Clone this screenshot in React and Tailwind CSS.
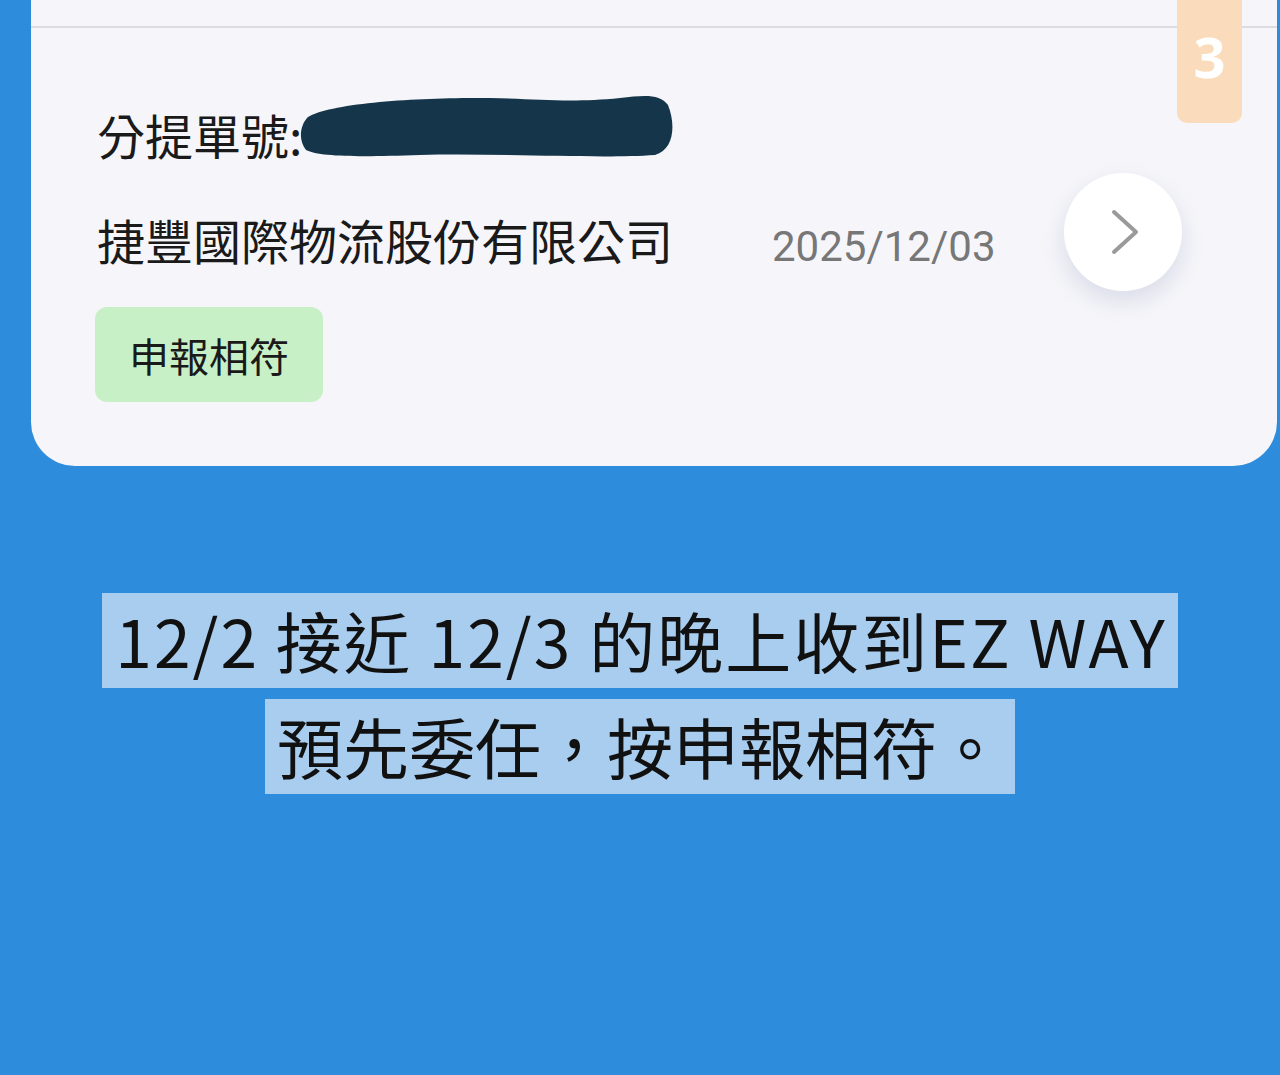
import React from "react";

const cjk = { fontFamily: '"Noto Sans CJK TC", "Noto Sans", sans-serif' };

const Redaction = () => (
  <svg width="373" height="63" viewBox="0 0 373 63" className="mb-[16px] -ml-[2px] shrink-0">
    <path
      d="M 8 22 C 30 8, 120 2, 190 3 C 240 4, 270 8, 320 3 C 345 0, 360 -1, 368 10 C 376 30, 374 55, 355 60 C 300 64, 200 58, 120 60 C 60 62, 20 62, 6 55 C -2 45, 0 30, 8 22 Z"
      fill="#15364a"
    />
  </svg>
);

export default function App() {
  return (
    <div className="w-[1280px] h-[1075px] overflow-hidden bg-[#2d8cdc]" style={cjk}>
      {/* CARD */}
      <div className="relative ml-[31px] mr-[3px] h-[466px] rounded-b-[44px] bg-[#f6f6fa]">
        <div className="h-[28px] border-b-2 border-[#dcdce2]" />

        {/* number badge */}
        <div className="absolute right-[35px] top-0 flex h-[123px] w-[65px] justify-center rounded-b-[10px] bg-[#fadcbc] pt-[28px]">
          <span
            className="text-[56px] font-bold leading-none text-white"
            style={{ fontFamily: '"Open Sans", "Liberation Sans", sans-serif' }}
          >
            3
          </span>
        </div>

        <div className="pl-[64px]">
          {/* 分提單號 */}
          <div className="mt-[78px] flex h-[56px] items-center pl-[2px]">
            <span className="text-[48px] leading-none text-[#1a1a1a]">分提單號:</span>
            <Redaction />
          </div>

          {/* company + date + arrow */}
          <div className="mt-[11px] grid h-[118px] grid-cols-[675px_292px_118px] items-center pl-[2px]">
            <span className="pt-[14px] text-[48px] leading-none whitespace-nowrap text-[#1a1a1a]">
              捷豐國際物流股份有限公司
            </span>
            <span
              className="pt-[30px] text-[42px] leading-none text-[#777777]"
              style={{ fontFamily: 'Roboto, "Liberation Sans", sans-serif' }}
            >
              2025/12/03
            </span>
            <div className="flex h-[118px] w-[118px] items-center justify-center rounded-full bg-white shadow-[0_10px_24px_rgba(150,160,190,0.3)]">
              <svg width="40" height="56" viewBox="0 0 40 56" className="ml-[6px]">
                <path d="M 8 8 L 30 28 L 8 48" fill="none" stroke="#9a9a9a" strokeWidth="4" strokeLinecap="round" strokeLinejoin="round" />
              </svg>
            </div>
          </div>

          {/* tag */}
          <div className="mt-[16px] flex h-[95px] w-[228px] items-center justify-center rounded-[12px] bg-[#c8f0c6]">
            <span className="text-[40px] leading-none text-[#1a1a1a]">申報相符</span>
          </div>
        </div>
      </div>

      {/* CAPTION */}
      <div className="mt-[127px] flex flex-col items-center gap-[11px]">
        <div className="h-[95px] whitespace-nowrap bg-[#a9cdef] pl-[13px] pr-[11px] text-[66px] leading-[92px] tracking-[2px] text-[#111111]">
          12/2 接近 12/3 的晚上收到EZ WAY
        </div>
        <div className="h-[95px] whitespace-nowrap bg-[#a9cdef] px-[12px] text-[66px] leading-[92px] text-[#111111]">
          預先委任，按申報相符。
        </div>
      </div>
    </div>
  );
}
